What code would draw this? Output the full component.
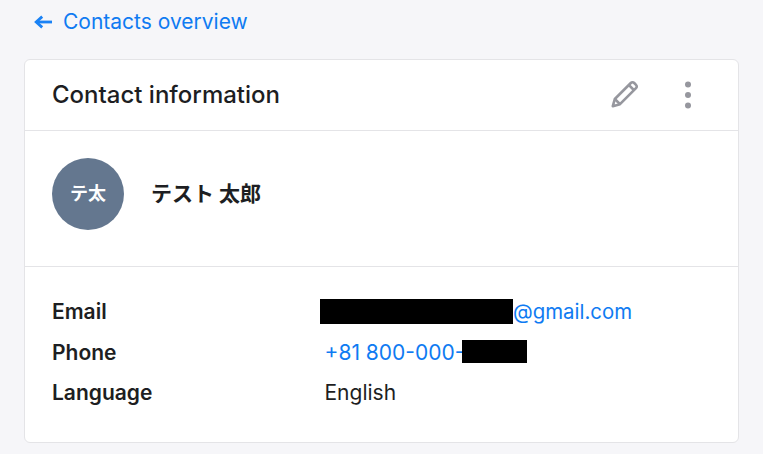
<script>
  let rows = [
    { label: 'Email' },
    { label: 'Phone' },
    { label: 'Language' },
  ];
</script>

<div class="page">
  <a class="back" href="#overview">
    <svg width="18" height="14" viewBox="0 0 18 14" fill="none" stroke="#1a82f5" stroke-width="2.8" aria-hidden="true">
      <path d="M18 7H2.5" />
      <path d="M8.2 1.6 2.2 7l6 5.4" />
    </svg>
    <span>Contacts overview</span>
  </a>

  <section class="card">
    <header class="head">
      <h2>Contact information</h2>
      <div class="actions">
        <svg width="30" height="30" viewBox="0 0 30 30" fill="none" stroke="#96979e" stroke-width="2.6" stroke-linejoin="round" aria-hidden="true">
          <path d="M2.8 27.2 4.8 20 20.8 4c1-1 2.4-1 3.4 0l1.8 1.8c1 1 1 2.4 0 3.4L10 25.2Z" />
          <path d="M19 6.2 23.8 11" />
          <path d="M4.8 20 10 25.2" />
        </svg>
        <svg class="dots" width="8" height="28" viewBox="0 0 8 28" fill="#96979e" aria-hidden="true">
          <circle cx="4" cy="3.6" r="3" />
          <circle cx="4" cy="14" r="3" />
          <circle cx="4" cy="24.4" r="3" />
        </svg>
      </div>
    </header>

    <div class="person">
      <div class="avatar">テ太</div>
      <div class="name">テスト 太郎</div>
    </div>

    <div class="details">
      <div class="label">{rows[0].label}</div>
      <div class="value"><span class="redact r1"></span><a class="mail" href="#email">@gmail.com</a></div>
      <div class="label">{rows[1].label}</div>
      <div class="value"><a href="#phone">+81 800-000-</a><span class="redact r2"></span></div>
      <div class="label">{rows[2].label}</div>
      <div class="value">English</div>
    </div>
  </section>
</div>

<style>
  :global(body) {
    margin: 0;
    background: #f6f6f9;
    font-family: Inter, "Noto Sans CJK JP", sans-serif;
    color: #1d1e22;
  }
  .page {
    width: 763px;
    height: 454px;
    overflow: hidden;
    padding: 0 24px;
    box-sizing: border-box;
  }
  a {
    color: #0f7bf2;
    text-decoration: none;
  }
  .back {
    display: flex;
    align-items: center;
    gap: 11px;
    height: 43px;
    padding-left: 10px;
    font-size: 21px;
  }
  .card {
    margin-top: 16px;
    width: 715px;
    height: 384px;
    box-sizing: border-box;
    background: #fff;
    border: 1px solid #e4e4e7;
    border-radius: 6px;
  }
  .head {
    display: flex;
    align-items: center;
    justify-content: space-between;
    height: 71px;
    box-sizing: border-box;
    padding: 0 46px 2px 27px;
    border-bottom: 1px solid #e4e4e7;
  }
  h2 {
    margin: 0;
    font-size: 24px;
    font-weight: 450;
  }
  .actions {
    display: flex;
    align-items: center;
    gap: 44px;
    height: 30px;
  }
  .dots {
    margin-top: 2px;
  }
  .person {
    display: flex;
    align-items: center;
    gap: 27px;
    height: 136px;
    padding: 0 27px 9px;
    box-sizing: border-box;
    border-bottom: 1px solid #e4e4e7;
  }
  .avatar {
    width: 72px;
    height: 72px;
    border-radius: 50%;
    background: #64778f;
    color: #fff;
    display: flex;
    align-items: center;
    justify-content: center;
    font-size: 18px;
    font-weight: 700;
    line-height: 68px;
  }
  .name {
    font-size: 21px;
    font-weight: 700;
    margin-top: -4px;
  }
  .details {
    display: grid;
    grid-template-columns: 273px 1fr;
    grid-template-rows: 41px 41px 39px;
    align-items: center;
    padding: 24px 27px 0;
    font-size: 21px;
  }
  .label {
    font-weight: 600;
  }
  .value {
    display: flex;
    align-items: center;
    margin-left: -0.5px;
  }
  .mail {
    font-size: 20.4px;
  }
  .redact {
    background: #000;
    flex: none;
  }
  .r1 {
    width: 193px;
    height: 25px;
    margin-left: -4.5px;
  }
  .r2 {
    width: 65px;
    height: 23px;
    margin-left: -2px;
    margin-bottom: 2px;
  }
</style>
